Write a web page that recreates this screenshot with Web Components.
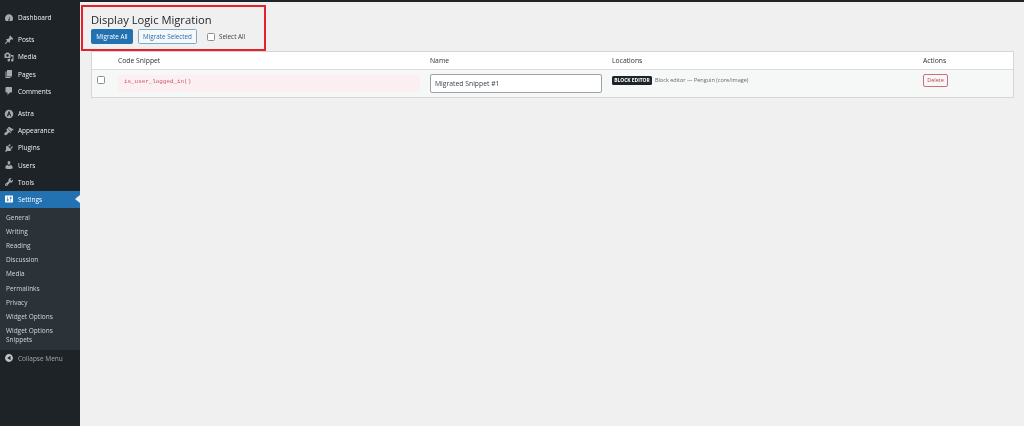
<!DOCTYPE html>
<html>
<head>
<meta charset="utf-8">
<title>Display Logic Migration</title>
<style>
  html, body { margin: 0; height: 100%; background: #f0f0f1; overflow: hidden; }
  body { font-family: "Open Sans", "Liberation Sans", sans-serif; font-size: 6.5px; color: #3c434a; }
</style>
</head>
<body>
<wp-admin>
  <admin-menu slot="menu">
    <menu-item icon="dashboard">Dashboard</menu-item>
    <menu-sep></menu-sep>
    <menu-item icon="posts">Posts</menu-item>
    <menu-item icon="media">Media</menu-item>
    <menu-item icon="pages">Pages</menu-item>
    <menu-item icon="comments">Comments</menu-item>
    <menu-sep></menu-sep>
    <menu-item icon="astra">Astra</menu-item>
    <menu-item icon="appearance">Appearance</menu-item>
    <menu-item icon="plugins">Plugins</menu-item>
    <menu-item icon="users">Users</menu-item>
    <menu-item icon="tools">Tools</menu-item>
    <menu-item icon="settings" current>Settings</menu-item>
    <sub-menu>
      <sub-item>General</sub-item>
      <sub-item>Writing</sub-item>
      <sub-item>Reading</sub-item>
      <sub-item>Discussion</sub-item>
      <sub-item>Media</sub-item>
      <sub-item>Permalinks</sub-item>
      <sub-item>Privacy</sub-item>
      <sub-item>Widget Options</sub-item>
      <sub-item>Widget Options Snippets</sub-item>
    </sub-menu>
    <menu-item icon="collapse" dim>Collapse Menu</menu-item>
  </admin-menu>
  <migration-page>
    <migration-head></migration-head>
    <snippet-table>
      <snippet-row code="is_user_logged_in()" name="Migrated Snippet #1" tag="BLOCK EDITOR" where="Block editor — Penguin (core/image)"></snippet-row>
    </snippet-table>
  </migration-page>
</wp-admin>
<script>
  const ICONS = {
    dashboard: '<path fill-rule="evenodd" d="M3.760 16h12.480C17.340 14.570 18 12.790 18 10.850c0-4.640-3.580-8.400-8-8.400s-8 3.760-8 8.400c0 1.940.660 3.720 1.760 5.150zM11.100 7.500l.9.400-1.200 4.800c.6.300 1 .9 1 1.500 0 1-.8 1.500-1.800 1.500s-1.800-.5-1.800-1.500c0-.8.600-1.500 1.400-1.700z"/>',
    posts: '<path d="M10.440 3.020l1.820-1.820 6.360 6.350-1.830 1.820c-1.050-.68-2.480-.57-3.410.36l-.75.75c-.92.93-1.040 2.350-.35 3.410l-1.830 1.820-2.410-2.410-2.800 2.790c-.42.42-3.380 2.710-3.800 2.290s1.860-3.390 2.280-3.810l2.790-2.790L4.100 9.360l1.830-1.820c1.050.69 2.480.57 3.400-.36l.75-.75c.93-.92 1.050-2.350.36-3.410z"/>',
    media: '<path fill-rule="evenodd" d="M13 11V4c0-.55-.45-1-1-1h-1.670L9 1H5L3.670 3H2c-.55 0-1 .45-1 1v7c0 .55.45 1 1 1h10c.55 0 1-.45 1-1zM7 4.500c1.380 0 2.500 1.120 2.500 2.500S8.380 9.500 7 9.500 4.500 8.380 4.500 7 5.620 4.500 7 4.500zM14 6h5v10.500c0 1.380-1.120 2.500-2.500 2.500S14 17.880 14 16.500s1.120-2.500 2.500-2.500c.17 0 .34.020.5.050V9h-3V6zm-4 8.050V13h2v3.500c0 1.380-1.120 2.500-2.500 2.500S7 17.880 7 16.500 8.120 14 9.500 14c.17 0 .34.020.5.050z"/>',
    pages: '<path d="M6 15V2h10v13H6zm-1 1h8v2H3V5h2v11z"/>',
    comments: '<path d="M5 2h9c1.100 0 2 .9 2 2v7c0 1.100-.9 2-2 2h-2l-5 5v-5H5c-1.100 0-2-.9-2-2V4c0-1.100.9-2 2-2z"/>',
    astra: '<path fill-rule="evenodd" d="M10 1.500a8.500 8.500 0 1 0 0 17 8.500 8.500 0 0 0 0-17zM9.200 4.500h1.700l3.700 10h-2l-.9-2.400H9.500L8.300 14.500H5.500zM10 7.800l-1 2.700h2.100z"/>',
    appearance: '<path d="M14.480 11.060L7.410 3.990l1.500-1.500c.5-.56 2.300-.47 3.510.32 1.210.8 1.430 1.280 2.910 2.100 1.180.64 2.450 1.260 4.450.85zm-.71.71L6.700 4.700 4.930 6.470c-.39.39-.39 1.020 0 1.410l1.060 1.060c.39.39.39 1.030 0 1.420-.6.6-1.430 1.110-2.210 1.690-.35.26-.7.53-1.010.84C1.430 13.230 0 15.330 1 18c2.670 1 4.770-.43 6.100-1.770.31-.31.58-.66.84-1.010.58-.78 1.090-1.610 1.690-2.210.39-.39 1.030-.39 1.420 0l1.060 1.060c.39.39 1.020.39 1.410 0z"/>',
    plugins: '<path d="M13.110 4.360L9.870 7.600 8 5.730l3.240-3.240c.35-.34 1.050-.2 1.560.32.520.510.660 1.210.310 1.550zm-8 1.770l.91-1.120 9.010 9.010-1.190.840c-.71.710-2.630 1.160-3.820 1.160H6.140L4.900 17.260c-.59.590-1.540.590-2.120 0-.59-.58-.59-1.530 0-2.120l1.240-1.240v-3.880c0-1.130.4-3.180 1.090-3.890zm7.260 3.970l3.240-3.240c.340-.35 1.040-.21 1.550.31.520.510.660 1.210.310 1.550l-3.240 3.250z"/>',
    users: '<path d="M10 9.250c-2.270 0-2.730-3.440-2.730-3.440C7 4.020 7.820 2 9.970 2c2.160 0 2.980 2.020 2.710 3.810 0 0-.41 3.440-2.680 3.440zm0 2.570L12.720 10c2.390 0 4.520 2.330 4.520 4.530v2.490s-3.650 1.130-7.240 1.130c-3.650 0-7.240-1.130-7.240-1.130v-2.490c0-2.250 1.940-4.530 4.280-4.530z"/>',
    tools: '<path fill-rule="evenodd" d="M16.680 9.770c-1.340 1.340-3.300 1.670-4.950.99l-5.410 6.520c-.99.990-2.590.990-3.580 0s-.99-2.590 0-3.570l6.520-5.420c-.68-1.650-.35-3.610.99-4.950 1.280-1.280 3.120-1.620 4.720-1.060l-2.890 2.890 2.820 2.820 2.860-2.860c.53 1.580.18 3.410-1.080 4.640zM3.810 16.210c.4.390 1.040.39 1.430 0 .4-.4.400-1.040 0-1.440-.39-.39-1.030-.39-1.430 0-.39.400-.39 1.040 0 1.440z"/>',
    settings: '<path fill-rule="evenodd" d="M18 16V4c0-.55-.45-1-1-1H3c-.55 0-1 .45-1 1v12c0 .55.45 1 1 1h14c.55 0 1-.45 1-1zM8 11h1c.55 0 1 .45 1 1s-.45 1-1 1H8v1.500c0 .28-.22.5-.5.5s-.5-.22-.5-.5V13H6c-.55 0-1-.45-1-1s.45-1 1-1h1V5.500c0-.28.22-.5.5-.5s.5.22.5.5V11zm5-2h-1c-.55 0-1-.45-1-1s.45-1 1-1h1V5.500c0-.28.22-.5.5-.5s.5.22.5.5V7h1c.55 0 1 .45 1 1s-.45 1-1 1h-1v5.500c0 .28-.22.5-.5.5s-.5-.22-.5-.5V9z"/>',
    collapse: '<path fill-rule="evenodd" d="M10 2.160c4.330 0 7.840 3.510 7.840 7.840s-3.510 7.840-7.840 7.840S2.160 14.330 2.160 10 5.670 2.160 10 2.160zM13 5.500v9L6.500 10z"/>'
  };

  class WpAdmin extends HTMLElement {
    constructor() {
      super();
      const root = this.attachShadow({mode: 'open'});
      // the reference is a soft, downscaled capture
      root.innerHTML = `<style>
        :host { display: flex; height: 426px; filter: blur(.3px); }
        .bar { position: absolute; left: 80px; right: 0; top: 0; height: 2px; background: #1d2327; }
        .box { position: absolute; left: 81px; top: 5px; width: 181px; height: 42px; border: 2px solid #e8202a; }
      </style>
      <slot name="menu"></slot>
      <slot></slot>
      <div class="bar"></div>
      <div class="box"></div>`;
    }
  }

  class AdminMenu extends HTMLElement {
    constructor() {
      super();
      const root = this.attachShadow({mode: 'open'});
      root.innerHTML = `<style>
        :host { display: block; width: 80px; flex: none; background: #1d2327; padding-top: 9px; box-sizing: border-box; }
      </style><slot></slot>`;
    }
  }

  class MenuItem extends HTMLElement {
    constructor() {
      super();
      const root = this.attachShadow({mode: 'open'});
      const icon = ICONS[this.getAttribute('icon')] || '';
      root.innerHTML = `<style>
        :host { display: flex; align-items: center; height: 17.200px; position: relative; color: #f0f0f1; font-size: 6.500px; }
        svg { width: 10px; height: 10px; margin: 0 4px; fill: #a7aaad; flex: none; }
        :host([current]) { background: #2271b1; color: #fff; }
        :host([current]) svg { fill: #fff; }
        :host([current])::after { content: ""; position: absolute; right: 0; top: 4px; border: 4px solid transparent; border-right: 5px solid #f0f0f1; border-left: 0; }
        :host([dim]) { color: #a7aaad; }
        :host([dim]) svg { fill: #c3c4c7; }
      </style>
      <svg viewBox="0 0 20 20">${icon}</svg><slot></slot>`;
    }
  }

  class MenuSep extends HTMLElement {
    constructor() {
      super();
      this.attachShadow({mode: 'open'}).innerHTML = `<style>:host { display: block; height: 5px; }</style>`;
    }
  }

  class SubMenu extends HTMLElement {
    constructor() {
      super();
      this.attachShadow({mode: 'open'}).innerHTML = `<style>
        :host { display: block; background: #2c3338; padding: 2px 0 3px; }
      </style><slot></slot>`;
    }
  }

  class SubItem extends HTMLElement {
    constructor() {
      super();
      this.attachShadow({mode: 'open'}).innerHTML = `<style>
        :host { display: block; padding: 2.600px 4px 2.600px 6px; line-height: 9px; font-size: 6.500px; color: #d5d6d8; }
      </style><slot></slot>`;
    }
  }

  class MigrationPage extends HTMLElement {
    constructor() {
      super();
      this.attachShadow({mode: 'open'}).innerHTML = `<style>
        :host { display: block; flex: 1; padding: 0 10px 0 11px; min-width: 0; }
      </style><slot></slot>`;
    }
  }

  class MigrationHead extends HTMLElement {
    constructor() {
      super();
      this.attachShadow({mode: 'open'}).innerHTML = `<style>
        :host { display: block; padding-top: 12px; height: 51px; box-sizing: border-box; }
        h1 { margin: 0 0 1px; font-size: 11.200px; line-height: 16px; font-weight: 400; color: #1d2327; }
        .acts { display: flex; align-items: center; height: 15px; }
        button { font: inherit; font-size: 6.300px; height: 15px; padding: 0; border-radius: 1.500px; border: 1px solid #2271b1; box-sizing: border-box; white-space: nowrap; }
        .pri { background: #2271b1; color: #fff; width: 42px; }
        .sec { background: #f6f7f7; color: #2271b1; width: 59px; margin-left: 5px; border-color: #7fa9ca; }
        label { display: flex; align-items: center; margin-left: 10px; font-size: 6.300px; color: #3c434a; }
        i { display: block; width: 6px; height: 6px; background: #fff; border: 1px solid #8c8f94; border-radius: 1.500px; margin-right: 4px; }
      </style>
      <h1>Display Logic Migration</h1>
      <div class="acts">
        <button class="pri">Migrate All</button>
        <button class="sec">Migrate Selected</button>
        <label><i></i>Select All</label>
      </div>`;
    }
  }

  const COLS = '26px 312px 182px 311px 1fr';

  class SnippetTable extends HTMLElement {
    constructor() {
      super();
      this.attachShadow({mode: 'open'}).innerHTML = `<style>
        :host { display: block; border: 1px solid #d5d6d8; background: #fff; box-sizing: border-box; }
        .head { display: grid; grid-template-columns: ${COLS}; height: 18px; box-sizing: border-box; align-items: center; font-size: 6.800px; color: #2c3338; border-bottom: 1px solid #dcdcde; }
      </style>
      <div class="head"><span></span><span>Code Snippet</span><span>Name</span><span>Locations</span><span>Actions</span></div>
      <slot></slot>`;
    }
  }

  class SnippetRow extends HTMLElement {
    constructor() {
      super();
      const root = this.attachShadow({mode: 'open'});
      root.innerHTML = `<style>
        :host { display: grid; grid-template-columns: ${COLS}; height: 27px; background: #f6f7f7; }
        .chk { padding: 6px 0 0 5px; }
        .chk i { display: block; width: 6px; height: 6px; background: #fff; border: 1px solid #8c8f94; border-radius: 1.500px; }
        .code { margin: 5px 10px 0 0; background: #fbeff1; color: #c9566f; font: 5.900px "Liberation Mono", monospace; padding: 0 6px; height: 17px; line-height: 14px; }
        .name { padding-top: 4px; }
        .name div { width: 172px; height: 19px; box-sizing: border-box; border: 1px solid #a0a2a6; border-radius: 2px; background: #fff; font-size: 6.800px; line-height: 17px; padding-left: 4px; color: #3c434a; }
        .loc { display: flex; align-items: flex-start; padding-top: 6px; font-size: 5.500px; color: #646970; }
        .tag { background: #1d2327; color: #fff; font-size: 4.900px; font-weight: 700; border-radius: 1.500px; height: 9px; line-height: 9px; width: 40px; text-align: center; margin-right: 3px; white-space: nowrap; }
        .where { line-height: 9px; }
        .act { padding-top: 4px; }
        .act span { display: block; width: 25px; height: 13px; box-sizing: border-box; border: 1px solid #cf6f75; border-radius: 2px; background: #f6f7f7; color: #c8474e; font-size: 5.500px; line-height: 11px; text-align: center; }
      </style>
      <div class="chk"><i></i></div>
      <div><div class="code">${this.getAttribute('code')}</div></div>
      <div class="name"><div>${this.getAttribute('name')}</div></div>
      <div class="loc"><span class="tag">${this.getAttribute('tag')}</span><span class="where">${this.getAttribute('where')}</span></div>
      <div class="act"><span>Delete</span></div>`;
    }
  }

  customElements.define('wp-admin', WpAdmin);
  customElements.define('admin-menu', AdminMenu);
  customElements.define('menu-item', MenuItem);
  customElements.define('menu-sep', MenuSep);
  customElements.define('sub-menu', SubMenu);
  customElements.define('sub-item', SubItem);
  customElements.define('migration-page', MigrationPage);
  customElements.define('migration-head', MigrationHead);
  customElements.define('snippet-table', SnippetTable);
  customElements.define('snippet-row', SnippetRow);
</script>
</body>
</html>
